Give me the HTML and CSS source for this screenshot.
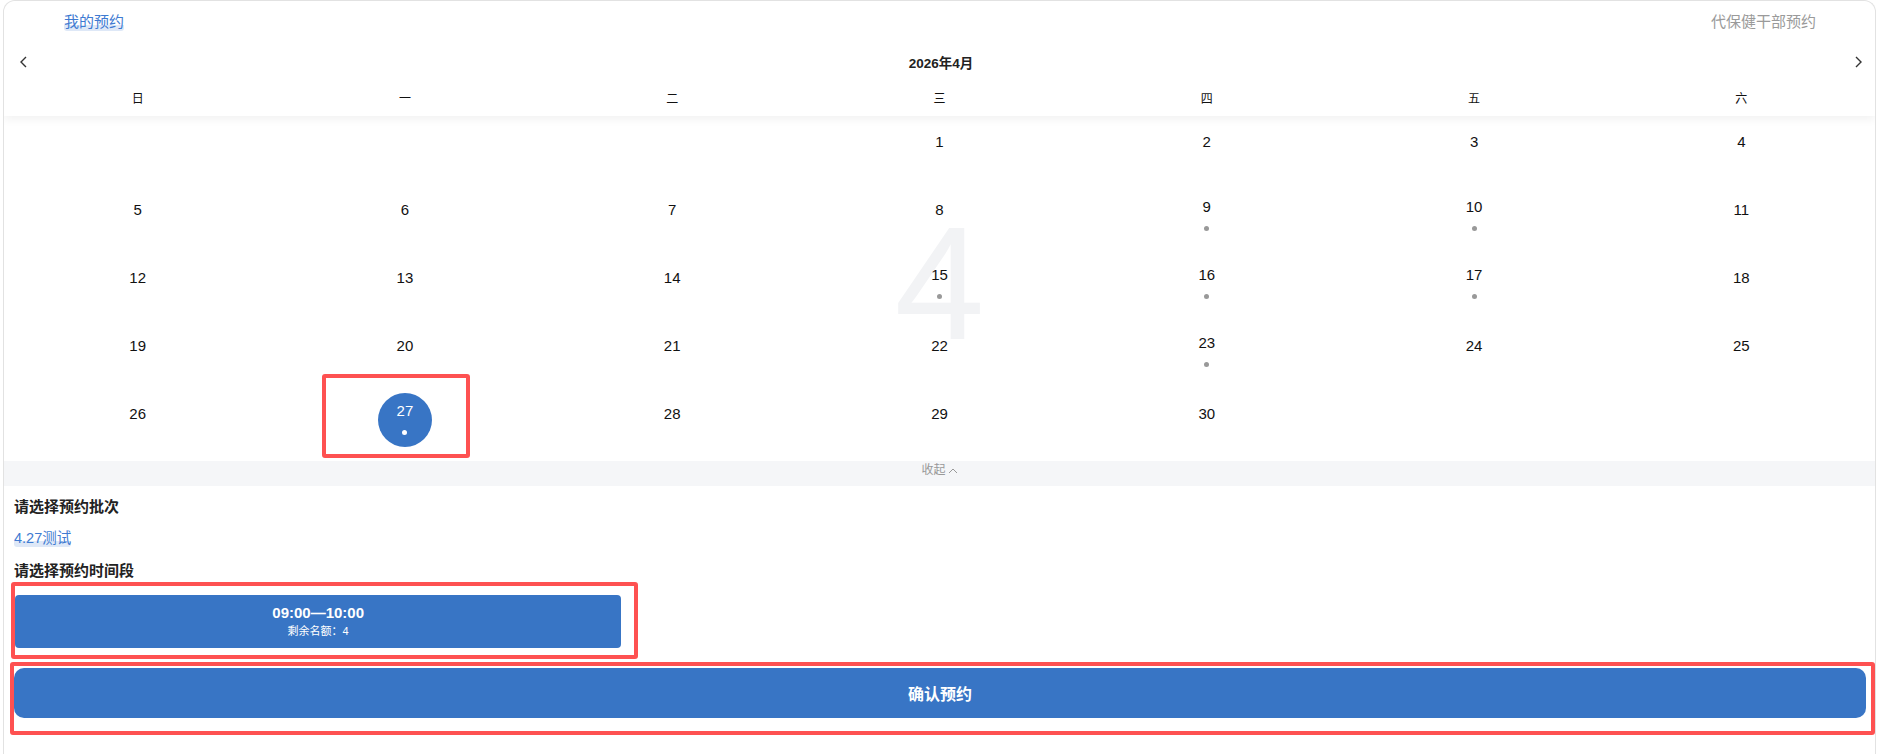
FILE: index.html
```html
<!DOCTYPE html>
<html lang="zh-CN">
<head>
    <meta charset="UTF-8">
    <meta name="viewport" content="width=device-width, initial-scale=1.0">
    <title>预约</title>
    <link rel="stylesheet" href="styles.css">
</head>
<body>
    <div class="page">
        <!-- 顶部：标签 + 月份 + 星期 -->
        <div class="cal-head">
            <div class="tabs">
                <span class="tab active">我的预约</span>
                <span class="tab">代保健干部预约</span>
            </div>
            <div class="month-bar">
                <svg class="arrow" width="10" height="14" viewBox="0 0 10 14"><polyline points="7,2 2,7 7,12" fill="none" stroke="#333" stroke-width="1.4"/></svg>
                <span class="month-title">2026年4月</span>
                <svg class="arrow" width="10" height="14" viewBox="0 0 10 14"><polyline points="3,2 8,7 3,12" fill="none" stroke="#333" stroke-width="1.4"/></svg>
            </div>
            <div class="weekdays">
                <span>日</span><span>一</span><span>二</span><span>三</span><span>四</span><span>五</span><span>六</span>
            </div>
        </div>

        <!-- 日期 -->
        <div class="days">
            <div class="watermark" aria-hidden="true">4</div>
            <div class="cell"></div>
            <div class="cell"></div>
            <div class="cell"></div>
            <div class="cell"><div class="day"><span class="num">1</span></div></div>
            <div class="cell"><div class="day"><span class="num">2</span></div></div>
            <div class="cell"><div class="day"><span class="num">3</span></div></div>
            <div class="cell"><div class="day"><span class="num">4</span></div></div>

            <div class="cell"><div class="day"><span class="num">5</span></div></div>
            <div class="cell"><div class="day"><span class="num">6</span></div></div>
            <div class="cell"><div class="day"><span class="num">7</span></div></div>
            <div class="cell"><div class="day"><span class="num">8</span></div></div>
            <div class="cell"><div class="day has-dot"><span class="num">9</span><i class="dot"></i></div></div>
            <div class="cell"><div class="day has-dot"><span class="num">10</span><i class="dot"></i></div></div>
            <div class="cell"><div class="day"><span class="num">11</span></div></div>

            <div class="cell"><div class="day"><span class="num">12</span></div></div>
            <div class="cell"><div class="day"><span class="num">13</span></div></div>
            <div class="cell"><div class="day"><span class="num">14</span></div></div>
            <div class="cell"><div class="day has-dot"><span class="num">15</span><i class="dot"></i></div></div>
            <div class="cell"><div class="day has-dot"><span class="num">16</span><i class="dot"></i></div></div>
            <div class="cell"><div class="day has-dot"><span class="num">17</span><i class="dot"></i></div></div>
            <div class="cell"><div class="day"><span class="num">18</span></div></div>

            <div class="cell"><div class="day"><span class="num">19</span></div></div>
            <div class="cell"><div class="day"><span class="num">20</span></div></div>
            <div class="cell"><div class="day"><span class="num">21</span></div></div>
            <div class="cell"><div class="day"><span class="num">22</span></div></div>
            <div class="cell"><div class="day has-dot"><span class="num">23</span><i class="dot"></i></div></div>
            <div class="cell"><div class="day"><span class="num">24</span></div></div>
            <div class="cell"><div class="day"><span class="num">25</span></div></div>

            <div class="cell"><div class="day"><span class="num">26</span></div></div>
            <div class="cell">
                <div class="day has-dot selected"><span class="num">27</span><i class="dot"></i>
                    <span class="mark mark-day"></span>
                </div>
            </div>
            <div class="cell"><div class="day"><span class="num">28</span></div></div>
            <div class="cell"><div class="day"><span class="num">29</span></div></div>
            <div class="cell"><div class="day"><span class="num">30</span></div></div>
            <div class="cell"></div>
            <div class="cell"></div>
        </div>

        <div class="collapse">
            收起
            <svg width="10" height="7" viewBox="0 0 10 7"><polyline points="1,6 5,2 9,6" fill="none" stroke="#999" stroke-width="1"/></svg>
        </div>

        <!-- 批次 / 时间段 -->
        <div class="content">
            <div class="section-title">请选择预约批次</div>
            <div class="batch"><span class="batch-name">4.27测试</span></div>
            <div class="section-title second">请选择预约时间段</div>

            <div class="slots">
                <div class="slot">
                    <div class="slot-time">09:00—10:00</div>
                    <div class="slot-left">剩余名额：4</div>
                    <span class="mark mark-slot"></span>
                </div>
            </div>

            <div class="confirm">
                确认预约
                <span class="mark mark-confirm"></span>
            </div>
        </div>
    </div>
</body>
</html>
```

FILE: styles.css
```css
body {
    margin: 0;
    background-color: #fff;
    font-family: "Liberation Sans", Arial, "Noto Sans CJK SC", sans-serif;
    color: #111;
    overflow: hidden;
}
.page {
    margin: 0 3px;
    height: 754px;
    box-sizing: border-box;
    border: 1px solid #e2e2e2;
    border-bottom: none;
    border-radius: 12px 12px 0 0;
    overflow: hidden;
}

/* 顶部 */
.cal-head {
    position: relative;
    z-index: 2;
    background-color: #fff;
    box-shadow: 0 4px 8px rgba(0, 0, 0, 0.05);
    border-radius: 12px 12px 0 0;
}
.tabs {
    height: 43px;
    display: flex;
    align-items: flex-start;
    justify-content: space-between;
    padding: 12px 59px 0 60px;
    box-sizing: border-box;
    font-size: 15px;
}
.tab {
    display: inline-block;
    line-height: 18px;
    color: #9a9a9a;
}
.tab.active,
.batch-name {
    display: inline-block;
    line-height: 18px;
    color: #3f7bd2;
    background: linear-gradient(to top, #dee8f7 0, #dee8f7 6px, transparent 6px);
    border-radius: 3px;
}
.month-bar {
    height: 36px;
    display: flex;
    align-items: center;
    justify-content: space-between;
    padding: 0 12px 0 15px;
}
.month-title {
    font-size: 13.5px;
    font-weight: bold;
    color: #222;
}
.weekdays {
    height: 35px;
    display: grid;
    grid-template-columns: repeat(7, 1fr);
    align-items: center;
    text-align: center;
    font-size: 12px;
    color: #111;
    padding-bottom: 1px;
}

/* 日期 */
.days {
    position: relative;
    display: grid;
    grid-template-columns: repeat(7, 1fr);
    grid-auto-rows: 68px;
    padding-top: 2px;
}
.watermark {
    position: absolute;
    left: 0;
    right: 0;
    top: 86px;
    text-align: center;
    font-size: 162px;
    line-height: 162px;
    color: #f2f3f5;
}
.cell {
    position: relative;
    display: flex;
    justify-content: center;
}
.day {
    position: relative;
    width: 54px;
    height: 54px;
    margin-top: 3px;
    box-sizing: border-box;
    padding-top: 12px;
    display: flex;
    flex-direction: column;
    align-items: center;
    border-radius: 50%;
}
.day.has-dot {
    padding-top: 9px;
}
.num {
    font-size: 15px;
    line-height: 18px;
}
.dot {
    width: 5px;
    height: 5px;
    margin-top: 10px;
    border-radius: 50%;
    background-color: #999;
}
.day.selected {
    background-color: #3875c5;
}
.day.selected .num {
    color: #fff;
}
.day.selected .dot {
    background-color: #fff;
}

.collapse {
    margin-top: 3px;
    height: 25px;
    box-sizing: border-box;
    padding-top: 1px;
    display: flex;
    align-items: flex-start;
    justify-content: center;
    gap: 2px;
    background-color: #f5f6f8;
    font-size: 12px;
    line-height: 16px;
    color: #999;
}
.collapse svg {
    margin-top: 5px;
}

/* 下方内容 */
.content {
    padding: 0 9px 0 10px;
}
.section-title {
    margin-top: 11px;
    font-size: 15px;
    line-height: 20px;
    font-weight: bold;
    color: #222;
}
.section-title.second {
    margin-top: 13px;
}
.batch {
    margin-top: 11px;
    font-size: 14.5px;
    line-height: 20px;
}
.slots {
    margin-top: 14px;
    display: grid;
    grid-template-columns: repeat(3, 1fr);
    gap: 16px;
    padding-left: 1px;
}
.slot {
    position: relative;
    height: 53px;
    box-sizing: border-box;
    padding-top: 8px;
    border-radius: 4px;
    background-color: #3875c5;
    color: #fff;
    text-align: center;
}
.slot-time {
    font-size: 15px;
    line-height: 20px;
    font-weight: bold;
}
.slot-left {
    margin-top: 1px;
    font-size: 11px;
    line-height: 15px;
}
.confirm {
    position: relative;
    margin-top: 20px;
    height: 50px;
    border-radius: 10px;
    background-color: #3875c5;
    color: #fff;
    font-size: 16px;
    font-weight: bold;
    display: flex;
    align-items: center;
    justify-content: center;
}

/* 截图上的红框标注 */
.mark {
    position: absolute;
    border: 4px solid #fe5151;
    border-radius: 3px;
    pointer-events: none;
}
.mark-day {
    left: -56px;
    top: -19px;
    width: 140px;
    height: 76px;
}
.mark-slot {
    left: -4px;
    top: -13px;
    right: -17px;
    bottom: -11px;
}
.mark-confirm {
    left: -4px;
    top: -6px;
    right: -9px;
    bottom: -17px;
}
```
